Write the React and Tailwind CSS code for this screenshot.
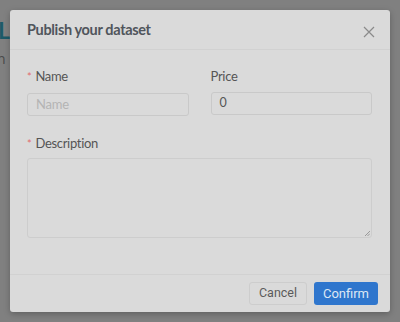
export default function App() {
  return (
    <div className="relative w-[400px] h-[322px] overflow-hidden bg-[#808080]" style={{ fontFamily: 'Lato, sans-serif' }}>
      <div className="pt-[19px]">
        <div className="text-[23px] font-bold leading-[22px] text-[#1d5a68] -ml-[2px]">L</div>
        <div className="mt-[10px] text-[14px] leading-[16px] text-[#4a4a4a] -ml-[3px]" style={{ fontFamily: '"Open Sans", sans-serif' }}>n</div>
      </div>
      <div className="absolute left-[10px] top-[10px] w-[380px] h-[302px] bg-[#dadada] rounded-[3px] shadow-[0_2px_6px_rgba(0,0,0,0.25)] flex flex-col">
        <div className="h-[40px] px-[17px] flex items-center justify-between border-b border-[#d1d1d1]">
          <span className="text-[14.5px] font-bold text-[#50555c] tracking-[-0.35px]">Publish your dataset</span>
          <svg width="12" height="12" viewBox="0 0 12 12" className="mr-[-2px] mt-[4px]">
            <path d="M1 1 L11 11 M11 1 L1 11" stroke="#8a8a8a" strokeWidth="1.2" fill="none" />
          </svg>
        </div>
        <div className="flex-1 px-[17px] pt-[18px]">
          <div className="grid grid-cols-2 gap-x-[22px] w-[345px]">
            <div>
              <div className="h-[18px] flex items-center text-[13px] tracking-[-0.3px] text-[#555]">
                <span className="text-[#e26a6a] text-[11px] mr-[4px]">*</span>Name
              </div>
              <div className="mt-[7px] h-[23px] border border-[#c9c9c9] rounded-[3px] flex items-center px-[8px] text-[13px] tracking-[-0.2px] text-[#b4b4b4]">Name</div>
            </div>
            <div>
              <div className="h-[18px] flex items-center text-[13px] tracking-[-0.3px] text-[#555]">Price</div>
              <div className="mt-[6px] h-[23px] border border-[#c9c9c9] rounded-[3px] flex items-center px-[8px] text-[12.5px] text-[#555]">0</div>
            </div>
          </div>
          <div className="mt-[19px] h-[18px] flex items-center text-[13px] tracking-[-0.3px] text-[#555]">
            <span className="text-[#e26a6a] text-[11px] mr-[4px]">*</span>Description
          </div>
          <div className="relative mt-[5px] w-[345px] h-[80px] border border-[#cdcdcd] rounded-[3px]">
            <svg width="5" height="5" viewBox="0 0 5 5" className="absolute right-[1px] bottom-[1px]">
              <path d="M0 5 L5 0 M2.5 5 L5 2.5" stroke="#888" strokeWidth="0.8" />
            </svg>
          </div>
        </div>
        <div className="h-[38px] border-t border-[#d1d1d1] flex items-center justify-end gap-[7px] pr-[12px]" style={{ fontFamily: 'Roboto, sans-serif' }}>
          <button className="h-[23px] w-[58px] rounded-[3px] border border-[#cdcdcd] bg-[#dadada] text-[12.5px] text-[#5a5a5a]">Cancel</button>
          <button className="h-[23px] w-[64px] rounded-[3px] bg-[#2f76cd] text-[13px] text-[#dde7f4]">Confirm</button>
        </div>
      </div>
    </div>
  );
}
